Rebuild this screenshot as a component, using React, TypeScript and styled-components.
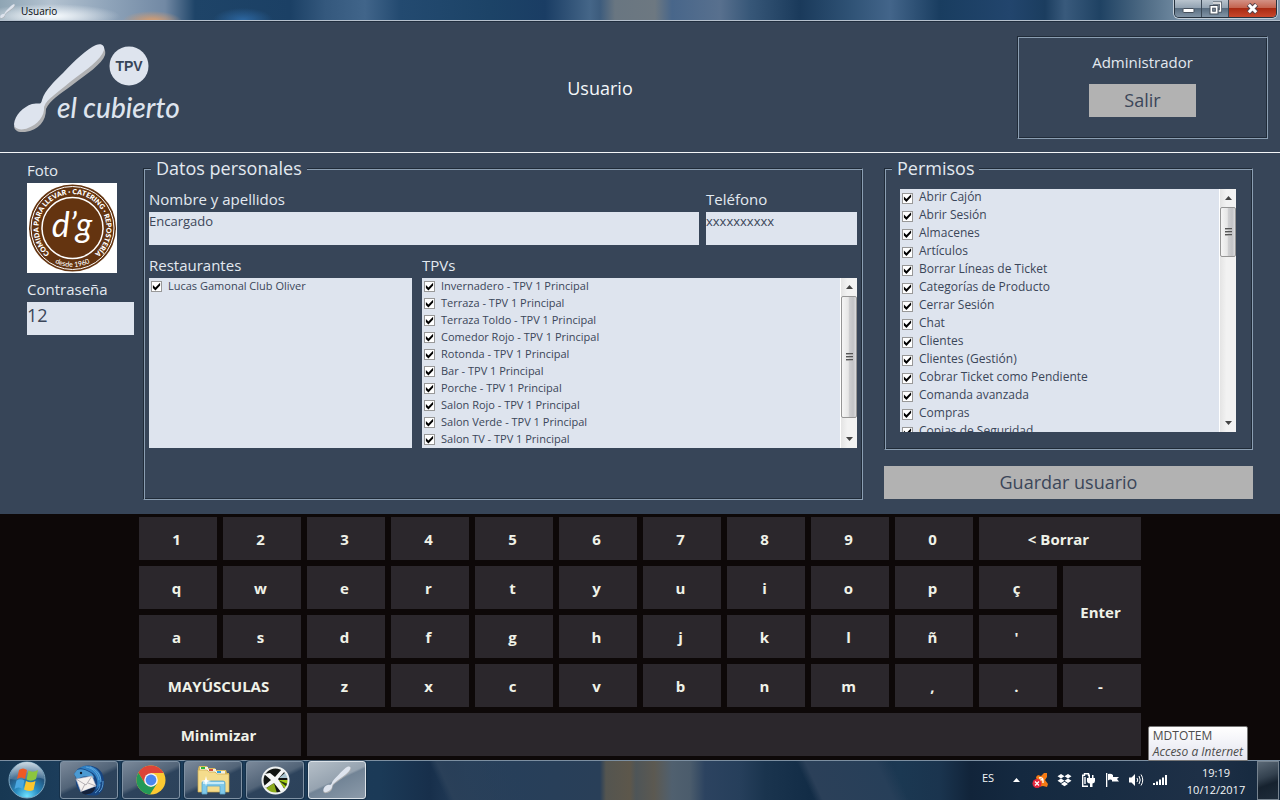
import React, { useId, useState } from "react";
import styled, { createGlobalStyle, css } from "styled-components";

const c = {
  panel: "#374558",
  field: "#dee4ee",
  ink: "#3b4659",
  label: "#e3e9f0",
  edgeLight: "#8b9eb2",
  edgeDark: "#202b38",
  button: "#b2b2b2",
  key: "#2b272c",
  board: "#0d0808",
};

const Global = createGlobalStyle`
  *, *::before, *::after { box-sizing: border-box; }
  body { margin: 0; background: ${c.board}; }
  button, input { font: inherit; color: inherit; border: 0; border-radius: 0; padding: 0; margin: 0; }
  button { cursor: pointer; }
`;

const Desktop = styled.div`
  display: flex;
  flex-direction: column;
  min-height: 100vh;
  overflow: hidden;
  background: ${c.board};
  font-family: "Open Sans", "Noto Sans", sans-serif;
  color: ${c.label};
`;

/* ---------- Window frame ---------- */

const TitleBar = styled.header`
  display: flex;
  align-items: flex-start;
  justify-content: space-between;
  height: 22px;
  padding-right: 3px;
  border-bottom: 1px solid #202d3e;
  box-shadow: inset 0 -1px 0 #b5c0cd;
  background:
    radial-gradient(ellipse 70px 12px at 50px 16px, #f1f6fa 10%, transparent 100%),
    radial-gradient(ellipse 30px 10px at 152px 21px, #c99b78 20%, transparent 100%),
    radial-gradient(ellipse 30px 12px at 243px 20px, #2c66a0 0%, transparent 100%),
    linear-gradient(90deg, #8fa5b4 0, #b3c2d0 50px, #8ea3b9 110px, #7289a4 165px, #1e4468 195px,
      #1b4065 290px, #34587d 325px, #41658a 365px, #234a70 400px, #1c4367 490px, #1a3d64 545px,
      #456688 590px, #3d5c7d 600px, #697681 615px, #6d7881 655px, #48668a 672px, #58708e 720px,
      #375778 750px, #1a3a5b 800px, #2f5275 850px, #43658a 890px, #193d60 940px, #22456d 1010px,
      #1b3d5f 1045px, #395a7c 1065px, #1f4263 1100px, #547089 1150px, #7b94aa 1190px, #7f98ae 100%);
`;

const WindowTitle = styled.h1`
  display: flex;
  align-items: center;
  gap: 6px;
  height: 22px;
  margin: 0;
  color: #05080c;
  font-size: 10px;
  font-weight: 400;
  line-height: 22px;
`;

const WindowButtons = styled.div`
  display: flex;
  height: 18px;
  border: 1px solid #26323e;
  border-top: 0;
  border-radius: 0 0 5px 5px;
  box-shadow: 0 0 0 1px #c3ced8;
  overflow: hidden;
`;

const WindowButton = styled.button<{ $close?: boolean }>`
  display: grid;
  place-items: center;
  width: ${(p) => (p.$close ? 47 : 27)}px;
  border-right: 1px solid #3b4957;
  background: ${(p) =>
    p.$close
      ? "linear-gradient(#d39184 0, #c4644f 45%, #a92b13 50%, #c8472c 100%)"
      : "linear-gradient(#b9c4ce 0, #93a3b2 45%, #596d80 50%, #8194a6 100%)"};
  &:last-child { border-right: 0; }
`;

/* ---------- Application ---------- */

const AppHeader = styled.div`
  display: flex;
  align-items: center;
  height: 131px;
  padding: 0 12px 0 14px;
  border-bottom: 1px solid #f4f6f8;
  background: ${c.panel};
`;

const ScreenTitle = styled.h2`
  flex: 1;
  margin: 0;
  padding-top: 2px;
  text-align: center;
  font-size: 18px;
  line-height: 24px;
  font-weight: 400;
  color: #f4f7fa;
`;

const etched = css`
  border: 1px solid;
  border-color: ${c.edgeDark} ${c.edgeLight} ${c.edgeLight} ${c.edgeDark};
  box-shadow: inset 1px 1px 0 ${c.edgeLight}, inset -1px -1px 0 ${c.edgeDark};
`;

const Session = styled.section`
  ${etched}
  display: flex;
  flex-direction: column;
  align-items: center;
  gap: 11px;
  width: 251px;
  height: 103px;
  padding: 14px 0 0;
  font-size: 15px;
  line-height: 22px;
`;

const FlatButton = styled.button<{ $wide?: boolean }>`
  width: ${(p) => (p.$wide ? "100%" : "107px")};
  height: 33px;
  background: ${c.button};
  color: ${c.ink};
  font-size: 18px;
  line-height: 33px;
`;

const Main = styled.main`
  display: flex;
  padding: 4px 27px 14px;
  background: ${c.panel};
`;

const Profile = styled.section`
  flex: none;
  width: 107px;
  margin-right: 9px;
  padding-top: 3px;
`;

const Photo = styled.svg`
  display: block;
  width: 90px;
  height: 90px;
  margin-bottom: 6px;
`;

const Group = styled.fieldset<{ $pad: string }>`
  ${etched}
  min-width: 0;
  margin: 0;
  padding: ${(p) => p.$pad};
`;

const Legend = styled.legend<{ $shift: number }>`
  margin-left: ${(p) => p.$shift}px;
  padding: 0 5px;
  background: ${c.panel};
  font-size: 18px;
  line-height: 23px;
`;

const PersonalGroup = styled(Group)`
  flex: 1;
`;

const Side = styled.section`
  flex: none;
  width: 369px;
  margin-left: 21px;
  display: flex;
  flex-direction: column;
  gap: 16px;
`;

const Row = styled.div<{ $columns: string; $gap: number }>`
  display: grid;
  grid-template-columns: ${(p) => p.$columns};
  column-gap: ${(p) => p.$gap}px;
  & + & { margin-top: 10px; }
`;

const Caption = styled.label`
  display: block;
  padding-bottom: 2px;
  font-size: 15px;
  line-height: 21px;
`;

const TextInput = styled.input<{ $large?: boolean }>`
  display: block;
  width: 100%;
  height: 33px;
  padding-bottom: ${(p) => (p.$large ? 7 : 15)}px;
  background: ${c.field};
  color: ${c.ink};
  font-size: ${(p) => (p.$large ? 18 : 13)}px;
  outline: none;
`;

const ListBox = styled.div<{ $height: number }>`
  display: flex;
  height: ${(p) => p.$height}px;
  background: ${c.field};
  color: ${c.ink};
`;

const Items = styled.ul`
  flex: 1;
  margin: 0;
  padding: 0;
  list-style: none;
  overflow: hidden;
`;

const ItemLabel = styled.label<{ $pitch: number }>`
  display: flex;
  align-items: center;
  gap: 6px;
  height: ${(p) => p.$pitch}px;
  padding-left: 2px;
  font-size: ${(p) => (p.$pitch === 18 ? 12 : 11)}px;
  line-height: 15px;
  white-space: nowrap;
`;

const ItemText = styled.span`
  padding-bottom: 3px;
`;

const Tick = styled.input`
  appearance: none;
  flex: none;
  display: grid;
  width: 11px;
  height: 11px;
  border: 1px solid #989898;
  background: #fff;
  &:checked::after {
    content: "";
    background: #000;
    clip-path: polygon(10% 34%, 38% 62%, 90% 8%, 90% 40%, 38% 95%, 10% 66%);
  }
`;

const ScrollTrack = styled.div`
  flex: none;
  display: flex;
  flex-direction: column;
  width: 17px;
  border-left: 1px solid #fff;
  background: linear-gradient(90deg, #e4e4e4, #f2f2f2 40%);
`;

const ScrollArrow = styled.button`
  display: grid;
  place-items: center;
  flex: none;
  height: 18px;
  background: transparent;
`;

const ScrollSpace = styled.div`
  flex: 1;
`;

const ScrollThumb = styled.div`
  display: grid;
  place-items: center;
  border: 1px solid #959595;
  border-radius: 2px;
  background: linear-gradient(90deg, #f5f5f5 0, #e6e6e6 45%, #cfcfd1 52%, #c2c3c6 80%, #dcdcde 100%);
`;

/* ---------- On-screen keyboard ---------- */

const Board = styled.section`
  display: grid;
  flex: 1;
  grid-template-columns: repeat(12, minmax(0, 78px));
  grid-auto-rows: 43px;
  gap: 6px;
  justify-content: center;
  align-content: start;
  padding: 3px 8px 4px;
  background: ${c.board};
`;

const KeyCap = styled.button<{ $cols?: number; $rows?: number }>`
  grid-column: span ${(p) => p.$cols ?? 1};
  grid-row: span ${(p) => p.$rows ?? 1};
  padding: 0 3px 0 0;
  background: ${c.key};
  color: #f0f2e8;
  font-size: 15px;
  font-weight: 700;
`;

/* ---------- Taskbar ---------- */

const Taskbar = styled.footer`
  position: relative;
  display: flex;
  align-items: stretch;
  height: 40px;
  padding-left: 7px;
  border-top: 1px solid #7c8fa1;
  background:
    linear-gradient(65deg, transparent 405px, #2a4059 412px, #2a405900 480px, transparent 738px, #2b4059 746px,
      #273f59 810px, transparent 824px),
    linear-gradient(90deg, #173853 0, #1c3d5b 60px, #1b3a57 380px, #172f4b 430px, #263f5b 465px,
      #293f58 600px, #545550 606px, #5d574b 630px, #4e5558 636px, #5c5951 654px, #50606f 672px,
      #4b5c6c 690px, #2c4360 705px, #263f5b 740px, #1a344e 765px, #122c46 810px, #1a334e 850px,
      #1b3852 900px, #1a344e 940px, #11243a 970px, #142940 1020px, #182c42 1100px, #1e3047 1200px, #14283d 100%);
`;

const Orb = styled.button`
  width: 40px;
  margin-right: 13px;
  background: transparent;
`;

const Task = styled.button<{ $active?: boolean }>`
  display: grid;
  place-items: center;
  width: 58px;
  height: 38px;
  margin-right: 4px;
  border: 1px solid ${(p) => (p.$active ? "#dbe2e8" : "#7f91a3")};
  border-radius: 3px;
  box-shadow: 0 0 0 1px #10253a80;
  background: ${(p) =>
    p.$active
      ? "linear-gradient(155deg, #b5bfc8 0, #96a3b0 48%, #728496 52%, #8c9baa 100%)"
      : "linear-gradient(155deg, #7b899a 0, #526478 46%, #2d435c 54%, #2c425a 100%)"};
`;

const Tray = styled.div`
  display: flex;
  align-items: center;
  margin-left: auto;
  color: #f3f6f8;
  font-size: 11px;
`;

const Language = styled.button`
  width: 16px;
  height: 34px;
  margin-right: 8px;
  background: transparent;
  line-height: 18px;
  align-self: start;
`;

const TrayButton = styled.button`
  display: grid;
  place-items: center;
  width: 24px;
  height: 24px;
  background: transparent;
`;

const Clock = styled.time`
  width: 86px;
  padding-left: 2px;
  text-align: center;
  line-height: 17px;
`;

const ShowDesktop = styled.button`
  align-self: stretch;
  width: 22px;
  margin: 0 1px 0 -1px;
  border: 1px solid #76838f;
  background: linear-gradient(160deg, #5a6875 0, #33414f 40%, #16222f 60%, #1e2c3a 100%);
`;

const Tooltip = styled.div`
  position: absolute;
  right: 32px;
  bottom: 39px;
  padding: 1px 4px 0;
  border: 1px solid #767676;
  border-radius: 2px 2px 0 0;
  background: linear-gradient(#ffffff, #e4e5f0);
  color: #4c4c4c;
  font-size: 12px;
  line-height: 16px;
  white-space: nowrap;
`;

/* ---------- Drawings ---------- */

function Spoon({ size }: { size: number }) {
  return (
    <svg width={size} height={size} viewBox="0 0 92 92" aria-hidden="true">
      <path fill="#aeb0b2" d="M84 3C90 2 92 7 91 12C88 22 73 33 56 45C45 53 36 58 32 66C31 78 25 87 11 89C4 90 1 87 1 83L30 62L72 14Z" />
      <path fill="#dee4ee" d="M82 2C88 0 91 4 90 8C87 19 72 29 56 41C43 51 33 57 30 65C31 73 23 81 14 85C7 88 1 85 1 80C1 72 8 64 17 62C23 60 26 63 28 58C31 48 40 40 49 31C61 18 73 6 82 2Z" />
    </svg>
  );
}

function Logo() {
  return (
    <svg width="169" height="90" viewBox="0 1 169 90" role="img" aria-label="TPV el cubierto">
      <path fill="#b0b1b3" d="M84 5C90 4 92 9 91 14C88 23 73 33 57 45C46 53 36 59 32 68C32 80 25 89 11 91C4 92 0 89 0 85L30 64L72 15Z" />
      <path fill="#dee4ee" d="M82 4C88 2 91 5 90 9C87 19 72 29 56 41C43 52 33 58 30 66C31 75 23 84 14 87C7 90 0 88 0 83C1 74 9 66 18 63C24 61 27 65 28 59C31 49 40 41 49 32C61 19 73 8 82 4Z" />
      <circle cx="115" cy="25" r="19.500" fill="#dee4ee" />
      <text x="115" y="30" textAnchor="middle" fontFamily="Liberation Sans, sans-serif" fontWeight="700" fontSize="14" fill={c.panel}>TPV</text>
      <text x="43" y="77" fontFamily="Lato, sans-serif" fontStyle="italic" fontWeight="500" fontSize="28" fill="#dee4ee">el cubierto</text>
    </svg>
  );
}

function Badge() {
  return (
    <Photo viewBox="0 0 90 90" role="img" aria-label="d'g desde 1960">
      <defs>
        <path id="ring-top" d="M45.500 45m-34 0a34 34 0 1 1 68 0a34 34 0 1 1 -68 0" transform="rotate(-50 45.500 45)" />
        <path id="ring-bottom" d="M6.500 45a39 39 0 0 0 78 0" />
      </defs>
      <rect width="90" height="90" fill="#fff" />
      <circle cx="45.500" cy="45" r="43.500" fill="#643410" />
      <circle cx="45.500" cy="45" r="41.500" fill="none" stroke="#fff" strokeWidth="1" />
      <circle cx="45.500" cy="45" r="30.500" fill="none" stroke="#fff" strokeWidth="1.500" />
      <g fill="#fff" fontFamily="Lato, sans-serif" fontWeight="800" fontSize="7">
        <text>
          <textPath href="#ring-top" startOffset="1">COMIDA PARA LLEVAR · CATERING · REPOSTERÍA</textPath>
        </text>
        <text fontWeight="500">
          <textPath href="#ring-bottom" startOffset="50%" textAnchor="middle">desde 1960</textPath>
        </text>
      </g>
      <text x="45" y="54" textAnchor="middle" fontFamily="Lato, sans-serif" fontStyle="italic" fontSize="34" fill="#fff">d’g</text>
    </Photo>
  );
}

function ArrowIcon({ down }: { down?: boolean }) {
  return (
    <svg width="7" height="4" viewBox="0 0 7 4" aria-hidden="true">
      <path d={down ? "M0 0H7L3.500 4Z" : "M0 4H7L3.500 0Z"} fill="#444" />
    </svg>
  );
}

function Scrollbar({ thumb }: { thumb: number }) {
  return (
    <ScrollTrack>
      <ScrollArrow type="button" aria-label="Subir"><ArrowIcon /></ScrollArrow>
      <ScrollThumb style={{ height: thumb }}>
        <svg width="7" height="8" viewBox="0 0 7 8" aria-hidden="true">
          <path d="M0 .5H7M0 3.500H7M0 6.500H7" stroke="#555" />
          <path d="M0 1.500H7M0 4.500H7M0 7.500H7" stroke="#aaa" />
        </svg>
      </ScrollThumb>
      <ScrollSpace />
      <ScrollArrow type="button" aria-label="Bajar"><ArrowIcon down /></ScrollArrow>
    </ScrollTrack>
  );
}

function CheckItem({ text, pitch }: { text: string; pitch: number }) {
  const id = useId();
  const [on, setOn] = useState(true);
  return (
    <li>
      <ItemLabel htmlFor={id} $pitch={pitch}>
        <Tick id={id} type="checkbox" checked={on} onChange={() => setOn(!on)} />
        <ItemText>{text}</ItemText>
      </ItemLabel>
    </li>
  );
}

function CheckList({ items, pitch, height, thumb, label }: {
  items: string[]; pitch: number; height: number; thumb?: number; label: string;
}) {
  return (
    <ListBox $height={height} role="group" aria-label={label}>
      <Items>{items.map((t) => <CheckItem key={t} text={t} pitch={pitch} />)}</Items>
      {thumb ? <Scrollbar thumb={thumb} /> : null}
    </ListBox>
  );
}

function StartOrb() {
  return (
    <svg width="38" height="38" viewBox="0 0 38 38" aria-hidden="true">
      <defs>
        <radialGradient id="orb" cx=".5" cy=".95" r=".9">
          <stop offset="0" stopColor="#6fe3ff" />
          <stop offset=".35" stopColor="#2b8fc4" />
          <stop offset=".7" stopColor="#23557f" />
          <stop offset="1" stopColor="#7794ad" />
        </radialGradient>
        <linearGradient id="gloss" x1="0" y1="0" x2="0" y2="1">
          <stop offset="0" stopColor="#e5eef4" stopOpacity=".75" />
          <stop offset="1" stopColor="#9db7ca" stopOpacity=".25" />
        </linearGradient>
      </defs>
      <circle cx="19" cy="19" r="18" fill="url(#orb)" stroke="#7fa9c2" />
      <path d="M2 18A17 17 0 0 1 36 18C26 14 12 21 2 18Z" fill="url(#gloss)" />
      <path d="M11 9Q15 6 19 9L17 18Q13 15 9 18Z" fill="#ee5a24" />
      <path d="M20.500 9.500Q25 12 30 9L28 18Q23 21 18.500 18.500Z" fill="#8cc63f" />
      <path d="M8.500 19.500Q12.500 17 16.500 19.500L14.500 28Q10.500 25 6.500 28Z" fill="#4aa7e0" />
      <path d="M18 20Q22.500 22.500 27.500 20L25.500 29Q20.500 31 16 28.500Z" fill="#fcc62d" />
    </svg>
  );
}

function MailIcon() {
  return (
    <svg width="32" height="32" viewBox="0 0 32 32" aria-hidden="true">
      <path d="M4 6C6 3 9 4 11 2C17 0 26 3 29 9C33 18 31 27 25 31C21 32 13 32 8 28C4 25 2 20 3 14L1 10Z" fill="#174581" />
      <path d="M4 6C8 2 13 6 18 8C24 11 26 18 23 26C28 22 30 14 26 8C22 2 15 1 11 2C8 3 6 4 4 6Z" fill="#2f7fc3" />
      <path d="M4 6C8 4 13 6 18 9C20 11 21 12 21 14C15 11 9 12 4 15L1 10Z" fill="#4b9ad2" />
      <path d="M13 3C20 4 25 9 26 16M17 3C24 6 28 11 28 18M27 20C27 24 25 27 22 29M30 17C30 22 29 26 26 28" fill="none" stroke="#6cb0e2" strokeWidth=".8" />
      <path d="M3 15L19 12L23 22L8 28Z" fill="#f5f1ef" stroke="#abb4c7" strokeWidth=".6" />
      <path d="M3 15L13 21L19 12M8 28L12 20M23 22L15 19" fill="none" stroke="#a5a0a4" strokeWidth=".8" />
      <path d="M8 28L22 23C22 27 19 30 15 30C12 31 10 30 8 28Z" fill="#15223b" />
      <circle cx="8" cy="9" r="1.200" fill="#111c2a" />
    </svg>
  );
}

function ChromeIcon() {
  return (
    <svg width="30" height="30" viewBox="0 0 30 30" aria-hidden="true">
      <circle cx="15" cy="15" r="14.500" fill="#fbc932" />
      <path d="M15 8H27.600A14.500 14.500 0 0 0 2.400 7.700L9 18.500Z" fill="#dc4437" />
      <path d="M2.400 7.700A14.500 14.500 0 0 0 14 29.500L21 18.500L15 22L9 18.500Z" fill="#239957" />
      <circle cx="15" cy="15" r="6.800" fill="#f5f5f5" />
      <circle cx="15" cy="15" r="5.400" fill="#4a87ed" />
    </svg>
  );
}

function FolderIcon() {
  return (
    <svg width="34" height="32" viewBox="0 0 34 32" aria-hidden="true">
      <path d="M2 5L3 2H11L12 4H19L20 6H30L31 9H33V28H2Z" fill="#d8b95c" />
      <path d="M4 3H12V6H4ZM12 5H20V8H12ZM20 7H29V10H20Z" fill="#f4f2e4" />
      <path d="M5 3H9V5H5Z" fill="#30b534" />
      <path d="M13 5H17V7H13Z" fill="#d34d37" />
      <path d="M21 7H25V9H21Z" fill="#2f9fe0" />
      <path d="M2 6H11L13 8H19L21 10H33V28H2Z" fill="#f4dc8c" stroke="#cba94e" strokeWidth=".7" />
      <path d="M6 30V19Q6 17 8 17H27Q29 17 29 19V30H24V22H11V30Z" fill="#7fc9ea" stroke="#5aa5c9" strokeWidth=".8" />
      <path d="M7 19H28" stroke="#dcf5fd" strokeWidth="1.500" />
      <path d="M10 12L11 16L15 17L11 18L10 22L9 18L5 17L9 16Z" fill="#fff" />
    </svg>
  );
}

function XIcon() {
  return (
    <svg width="29" height="29" viewBox="0 0 29 29" aria-hidden="true">
      <circle cx="14.500" cy="14.500" r="13" fill="#121512" />
      <path d="M18 12L25 6A13 13 0 0 1 27.500 12Z" fill="#a9c4d0" />
      <path d="M17 14H27.500A13 13 0 0 1 24 23Z" fill="#a3cc14" />
      <path d="M13 17L4 23A13 13 0 0 0 16 27.500Z" fill="#8bab1b" />
      <path d="M17 14L26 21L27 18Z" fill="#2b3a12" />
      <path d="M3 8L9 7L14 11L21 3L24 5L17 13L24 24L20 26L13 17L5 22L3 20L10 14Z" fill="#f6f8f7" />
      <circle cx="14.500" cy="14.500" r="13" fill="none" stroke="#eef1f1" strokeWidth="2" />
    </svg>
  );
}

const trayIcons: { name: string; art: React.ReactNode }[] = [
  { name: "Iconos ocultos", art: <path d="M5 10L8.500 6L12 10Z" fill="#fff" /> },
  {
    name: "Antivirus",
    art: (
      <>
        <path d="M4 5L6 3L9 4L12 1L15 1L15 5L13 8L16 12L15 15L11 14L6 15L2 13L5 9Z" fill="#f57b14" />
        <path d="M7 6Q11 5 11 8V11M11 8Q8 7 8 10" fill="none" stroke="#fff" strokeWidth="1.300" />
        <circle cx="5" cy="11.500" r="4.500" fill="#e5263c" />
        <path d="M3 9.500L7 13.500M7 9.500L3 13.500" stroke="#fff" strokeWidth="1.200" />
      </>
    ),
  },
  {
    name: "Dropbox",
    art: <path d="M5 2L8.500 4.300L5 6.500L1.500 4.300ZM12 2L15.500 4.300L12 6.500L8.500 4.300ZM5 6.500L8.500 8.700L5 11L1.500 8.700ZM12 6.500L15.500 8.700L12 11L8.500 8.700ZM8.500 9.700L12 11.900L8.500 14.200L5 11.900Z" fill="#fff" />,
  },
  {
    name: "Energía",
    art: (
      <>
        <path d="M8 14.200H2.700V3.200H4.500V1.700H8.500V3.200H10" fill="none" stroke="#fff" strokeWidth="1.400" />
        <path d="M5 5V12" stroke="#fff" strokeWidth="1.400" />
        <path d="M7 6H15V9Q15 11 12.500 11.500V15H10V11.500Q7 11 7 9ZM8.500 3H10V6H8.500ZM12 3H13.500V6H12Z" fill="#fff" />
      </>
    ),
  },
  {
    name: "Centro de actividades",
    art: <path d="M2 1H3.300V15H2ZM4 2Q7 1 9 3V5L15 5L13 7L15 9.500H8V8Q6 7 4 8.500Z" fill="#fff" />,
  },
  {
    name: "Volumen",
    art: (
      <>
        <path d="M1 5.500H3.500L7 2V14L3.500 10.500H1Z" fill="#fff" />
        <path d="M9 6Q10.500 8 9 10M11 4Q13.500 8 11 12M13 2.500Q16.500 8 13 13.500" fill="none" stroke="#fff" />
      </>
    ),
  },
  { name: "Red", art: <path d="M1 11H3V13H1ZM4 9.500H6V13H4ZM7 7.500H9V13H7ZM10 5.500H12V13H10ZM13 3H15V13H13Z" fill="#fff" /> },
];

/* ---------- Content ---------- */

const tpvs = ["Invernadero", "Terraza", "Terraza Toldo", "Comedor Rojo", "Rotonda", "Bar", "Porche", "Salon Rojo", "Salon Verde", "Salon TV"]
  .map((n) => `${n} - TPV 1 Principal`);

const permissions = [
  "Abrir Cajón", "Abrir Sesión", "Almacenes", "Artículos", "Borrar Líneas de Ticket",
  "Categorías de Producto", "Cerrar Sesión", "Chat", "Clientes", "Clientes (Gestión)",
  "Cobrar Ticket como Pendiente", "Comanda avanzada", "Compras", "Copias de Seguridad",
];

type KeyDef = { t: string; cols?: number; rows?: number; name?: string };
const one = (s: string): KeyDef[] => s.split(" ").map((t) => ({ t }));
const keys: KeyDef[] = [
  ...one("1 2 3 4 5 6 7 8 9 0"), { t: "< Borrar", cols: 2 },
  ...one("q w e r t y u i o p ç"), { t: "Enter", rows: 2 },
  ...one("a s d f g h j k l ñ '"),
  { t: "MAYÚSCULAS", cols: 2 }, ...one("z x c v b n m , . -"),
  { t: "Minimizar", cols: 2 }, { t: "", cols: 10, name: "Espacio" },
];

export default function App() {
  return (
    <Desktop>
      <Global />
      <TitleBar>
        <WindowTitle><Spoon size={15} />Usuario</WindowTitle>
        <WindowButtons>
          <WindowButton type="button" aria-label="Minimizar ventana">
            <svg width="13" height="17" viewBox="0 0 13 17"><rect x="1" y="8.500" width="11" height="4" rx="1" fill="#fff" stroke="#46505c" /></svg>
          </WindowButton>
          <WindowButton type="button" aria-label="Restaurar ventana">
            <svg width="13" height="15" viewBox="0 0 13 15">
              <path d="M4 2H11.500V10H9.500" fill="none" stroke="#46505c" strokeWidth="3" />
              <path d="M4 2H11.500V10H9.500" fill="none" stroke="#fff" strokeWidth="1.400" />
              <rect x="1" y="4.500" width="8" height="8.500" fill="#fff" stroke="#46505c" />
              <rect x="3.700" y="7.200" width="2.600" height="3" fill="#8797a7" stroke="#46505c" />
            </svg>
          </WindowButton>
          <WindowButton type="button" aria-label="Cerrar ventana" $close>
            <svg width="13" height="12" viewBox="0 0 13 12">
              <path d="M2.500 1.500L10.500 9.500M10.500 1.500L2.500 9.500" stroke="#57444c" strokeWidth="5" />
              <path d="M2.800 1.800L10.200 9.200M10.200 1.800L2.800 9.200" stroke="#fff" strokeWidth="3" />
            </svg>
          </WindowButton>
        </WindowButtons>
      </TitleBar>

      <AppHeader>
        <Logo />
        <ScreenTitle>Usuario</ScreenTitle>
        <Session>
          <span>Administrador</span>
          <FlatButton type="button">Salir</FlatButton>
        </Session>
      </AppHeader>

      <Main>
        <Profile>
          <Caption as="div">Foto</Caption>
          <Badge />
          <Caption htmlFor="clave">Contraseña</Caption>
          <TextInput id="clave" $large defaultValue="12" />
        </Profile>

        <PersonalGroup $pad="9px 5px 51px">
          <Legend $shift={2}>Datos personales</Legend>
          <Row $columns="minmax(0, 1fr) 151px" $gap={7}>
            <div>
              <Caption htmlFor="nombre">Nombre y apellidos</Caption>
              <TextInput id="nombre" defaultValue="Encargado" />
            </div>
            <div>
              <Caption htmlFor="telefono">Teléfono</Caption>
              <TextInput id="telefono" defaultValue="xxxxxxxxxx" />
            </div>
          </Row>
          <Row $columns="263px minmax(0, 1fr)" $gap={10}>
            <div>
              <Caption as="div">Restaurantes</Caption>
              <CheckList label="Restaurantes" items={["Lucas Gamonal Club Oliver"]} pitch={17} height={170} />
            </div>
            <div>
              <Caption as="div">TPVs</Caption>
              <CheckList label="TPVs" items={tpvs} pitch={17} height={170} thumb={122} />
            </div>
          </Row>
        </PersonalGroup>

        <Side>
          <Group $pad="9px 16px 17px 15px">
            <Legend $shift={-8}>Permisos</Legend>
            <CheckList label="Permisos" items={permissions} pitch={18} height={243} thumb={50} />
          </Group>
          <FlatButton type="button" $wide>Guardar usuario</FlatButton>
        </Side>
      </Main>

      <Board aria-label="Teclado">
        {keys.map((k) => (
          <KeyCap key={k.t} type="button" $cols={k.cols} $rows={k.rows} aria-label={k.name}>{k.t}</KeyCap>
        ))}
      </Board>

      <Taskbar>
        <Orb type="button" aria-label="Inicio"><StartOrb /></Orb>
        <Task type="button" aria-label="Correo"><MailIcon /></Task>
        <Task type="button" aria-label="Chrome"><ChromeIcon /></Task>
        <Task type="button" aria-label="Explorador"><FolderIcon /></Task>
        <Task type="button" aria-label="Herramientas"><XIcon /></Task>
        <Task type="button" aria-label="Usuario" $active><Spoon size={28} /></Task>
        <Tray>
          <Language type="button">ES</Language>
          {trayIcons.map((i) => (
            <TrayButton key={i.name} type="button" aria-label={i.name}>
              <svg width="17" height="17" viewBox="0 0 17 17" aria-hidden="true">{i.art}</svg>
            </TrayButton>
          ))}
          <Clock dateTime="2017-12-10T19:19">19:19<br />10/12/2017</Clock>
          <ShowDesktop type="button" aria-label="Mostrar escritorio" />
        </Tray>
        <Tooltip role="tooltip">MDTOTEM<br /><em>Acceso a Internet</em></Tooltip>
      </Taskbar>
    </Desktop>
  );
}
